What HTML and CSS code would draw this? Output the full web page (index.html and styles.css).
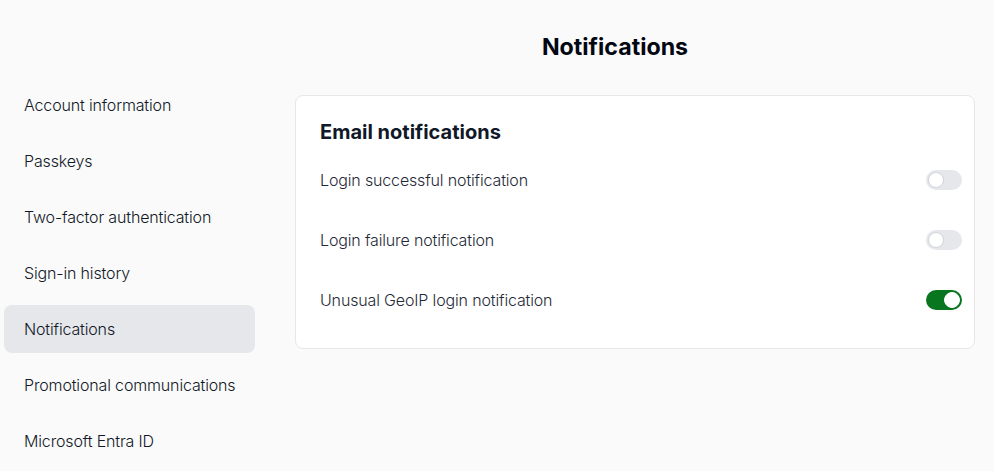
FILE: index.html
```html
<!DOCTYPE html>
<html lang="en">
<head>
<meta charset="utf-8">
<title>Notifications</title>
<link rel="stylesheet" href="styles.css">
</head>
<body>
<div class="layout">
  <nav class="sidebar">
    <a class="nav-item">Account information</a>
    <a class="nav-item">Passkeys</a>
    <a class="nav-item">Two-factor authentication</a>
    <a class="nav-item">Sign-in history</a>
    <a class="nav-item active">Notifications</a>
    <a class="nav-item">Promotional communications</a>
    <a class="nav-item">Microsoft Entra ID</a>
  </nav>
  <main class="main">
    <h1 class="page-title">Notifications</h1>
    <section class="card">
      <h2 class="card-title">Email notifications</h2>
      <div class="row">
        <span class="row-label">Login successful notification</span>
        <span class="toggle"><span class="knob"></span></span>
      </div>
      <div class="row">
        <span class="row-label">Login failure notification</span>
        <span class="toggle"><span class="knob"></span></span>
      </div>
      <div class="row">
        <span class="row-label">Unusual GeoIP login notification</span>
        <span class="toggle on"><span class="knob"></span></span>
      </div>
    </section>
  </main>
</div>
</body>
</html>
```
FILE: styles.css
```css
* { box-sizing: border-box; }
html, body { margin: 0; padding: 0; }
body {
  background: #fafafa;
  font-family: Inter, "Noto Sans", sans-serif;
  color: #1f2937;
  width: 994px;
  height: 471px;
  overflow: hidden;
}
.layout {
  display: flex;
  padding-left: 4px;
}
.sidebar {
  width: 251px;
  flex: none;
  padding-top: 81px;
  display: flex;
  flex-direction: column;
  gap: 8px;
}
.nav-item {
  display: flex;
  align-items: center;
  height: 48px;
  padding-left: 20px;
  border-radius: 8px;
  font-size: 16px;
  font-weight: 300;
  letter-spacing: -0.15px;
  color: #111827;
}
.nav-item.active { background: #e5e7eb; }
.main {
  width: 720px;
  flex: none;
  padding-top: 33px;
}
.page-title {
  margin: 0 0 34px;
  text-align: center;
  font-size: 23.2px;
  line-height: 28px;
  font-weight: 700;
  color: #030712;
}
.card {
  margin-left: 40px;
  background: #fff;
  border: 1px solid #e5e7eb;
  border-radius: 8px;
  padding: 22px 12px 18px 24px;
}
.card-title {
  margin: 0 0 4px;
  font-size: 20px;
  line-height: 28px;
  font-weight: 700;
  color: #111827;
}
.row {
  height: 60px;
  display: flex;
  align-items: center;
  justify-content: space-between;
}
.row-label {
  font-size: 16px;
  font-weight: 300;
  letter-spacing: -0.15px;
  color: #1f2937;
}
.toggle {
  position: relative;
  width: 36px;
  height: 20px;
  border-radius: 10px;
  background: #e5e7eb;
  flex: none;
}
.knob {
  position: absolute;
  top: 2px;
  left: 2px;
  width: 16px;
  height: 16px;
  border-radius: 50%;
  background: #fff;
  border: 1px solid #d1d5db;
}
.toggle.on { background: #08751f; }
.toggle.on .knob { left: 18px; border-color: #fff; }
```
